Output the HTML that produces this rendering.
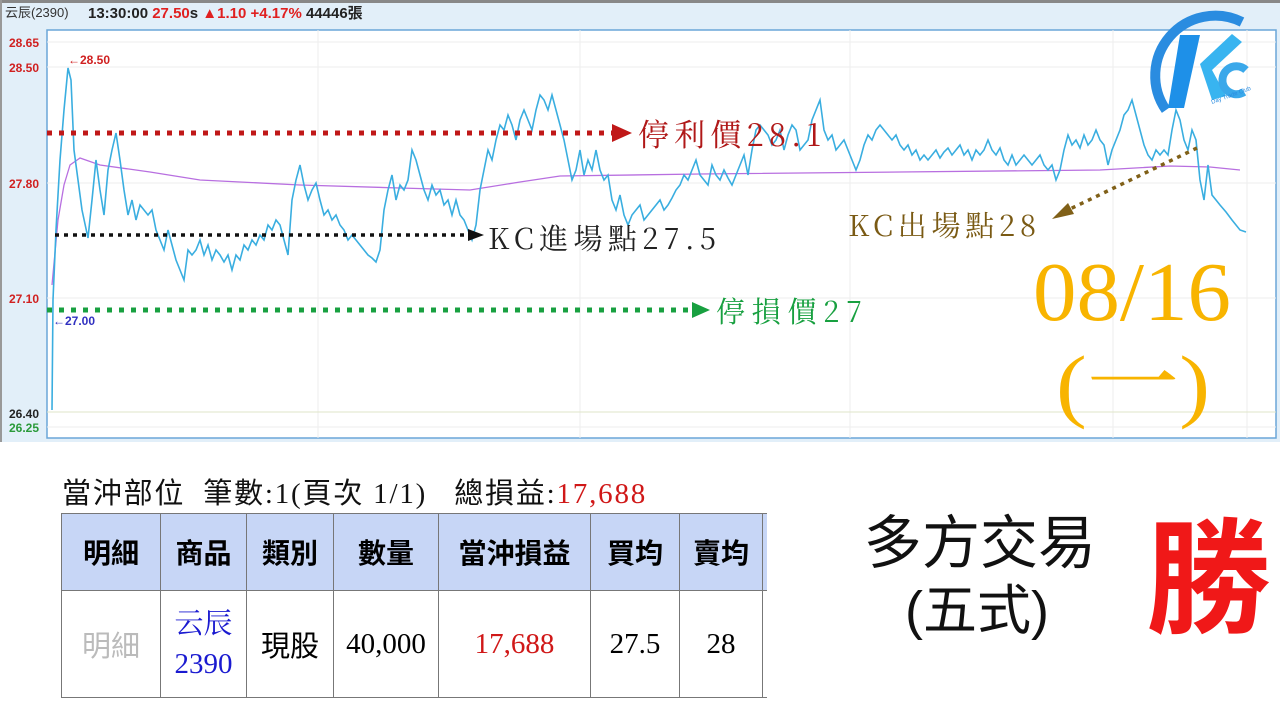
<!DOCTYPE html>
<html><head><meta charset="utf-8"><style>
body{margin:0;width:1280px;height:721px;background:#fff;overflow:hidden;position:relative;font-family:"Liberation Sans","Noto Sans CJK TC",sans-serif}
.abs{position:absolute;white-space:nowrap}
table{border-collapse:collapse;position:absolute;left:61px;top:513px}
td{border:1.5px solid #777;text-align:center;padding:0}
th{border:1.5px solid #777;background:#c7d6f6;font-weight:bold;font-size:28px;height:76px;font-family:"Liberation Sans","Noto Sans CJK TC",sans-serif;padding:0}
td{height:106px;font-size:29px;font-family:"Liberation Serif","Noto Serif CJK SC",serif}
</style></head><body>
<svg width="1280" height="442" style="position:absolute;left:0;top:0" font-family="Liberation Sans, Noto Sans CJK TC, sans-serif">
<rect x="0" y="0" width="1280" height="442" fill="#e2eff9"/>
<rect x="0" y="0" width="1280" height="3" fill="#888"/>
<rect x="0" y="0" width="2" height="442" fill="#999"/>
<rect x="47" y="30" width="1229" height="408" fill="#fff" stroke="#6aa6d8" stroke-width="1.5"/>
<g stroke="#eee" stroke-width="1">
<line x1="47" y1="42" x2="1276" y2="42"/><line x1="47" y1="67" x2="1276" y2="67"/><line x1="47" y1="183" x2="1276" y2="183"/><line x1="47" y1="298" x2="1276" y2="298"/><line x1="47" y1="427" x2="1276" y2="427"/>
<line x1="318" y1="30" x2="318" y2="438"/><line x1="580" y1="30" x2="580" y2="438"/><line x1="850" y1="30" x2="850" y2="438"/><line x1="1113" y1="30" x2="1113" y2="438"/><line x1="1247" y1="30" x2="1247" y2="438"/>
</g>
<line x1="47" y1="412" x2="1276" y2="412" stroke="#dfe6c8"/>
<text x="5" y="17" font-size="13" fill="#333">云辰(2390)</text>
<text x="88" y="18" font-size="15" font-weight="bold" fill="#222">13:30:00 <tspan fill="#e02020">27.50</tspan>s <tspan fill="#e02020">▲1.10 +4.17%</tspan> 44446張</text>
<g font-size="12" font-weight="bold">
<text x="9" y="47" fill="#d02020">28.65</text><text x="9" y="72" fill="#d02020">28.50</text><text x="9" y="188" fill="#d02020">27.80</text><text x="9" y="303" fill="#d02020">27.10</text><text x="9" y="418" fill="#222">26.40</text><text x="9" y="432" fill="#2a9a3a">26.25</text>
<text x="68" y="64" fill="#d02020">←28.50</text><text x="53" y="325" fill="#3030c0">←27.00</text>
</g>
<polyline fill="none" stroke="#b86fe0" stroke-width="1.3" points="52,285 58,220 64,185 70,165 80,158 100,165 150,172 200,180 300,185 400,188 470,190 520,182 560,176 700,174 900,172 1100,170 1170,166 1210,167 1240,170"/>
<polyline fill="none" stroke="#3aaee0" stroke-width="1.6" points="52,410 53,300 56,230 60,160 64,110 68,68 71,80 74,150 78,180 82,210 88,238 92,200 96,160 100,190 104,215 108,170 112,150 116,133 120,160 124,190 128,215 132,200 136,220 140,205 144,210 148,215 152,210 156,230 160,240 164,250 168,230 172,245 176,260 180,270 184,280 188,250 192,255 196,250 200,240 204,255 208,245 212,260 216,250 220,255 224,262 228,255 232,270 236,255 240,260 244,245 248,250 252,240 256,245 260,235 264,240 268,225 272,230 276,220 280,225 284,240 288,255 292,200 296,180 300,165 304,185 308,200 312,190 316,183 320,200 324,215 328,210 332,220 336,215 340,225 344,230 348,240 352,235 356,240 360,245 364,250 368,255 372,258 376,262 380,250 384,210 388,190 392,175 396,200 400,185 404,190 408,180 412,150 416,160 420,175 424,190 428,200 432,185 436,195 440,190 444,205 448,200 452,215 456,200 460,215 464,220 468,230 472,240 476,225 480,190 484,170 488,150 492,160 496,140 500,125 504,130 508,115 512,125 516,140 520,120 524,110 528,120 532,130 536,110 540,95 544,100 548,110 552,95 556,110 560,125 564,140 568,160 572,180 576,170 580,150 584,175 588,160 592,170 596,150 600,170 604,180 608,175 612,200 616,210 620,195 624,215 628,225 632,215 636,210 640,205 644,220 648,215 652,210 656,205 660,200 664,210 668,205 672,198 676,190 680,185 684,175 688,180 692,170 696,160 700,175 704,180 708,185 712,165 716,175 720,180 724,170 728,178 732,185 736,175 740,165 744,155 748,175 752,150 756,130 760,125 764,130 768,135 772,145 776,140 780,130 784,150 788,135 792,125 796,130 800,150 804,145 808,140 812,120 816,110 820,100 824,130 828,140 832,135 836,150 840,145 844,140 848,150 852,160 856,170 860,160 864,145 868,135 872,140 876,130 880,125 884,130 888,135 892,140 896,135 900,145 904,150 908,145 912,155 916,150 920,160 924,155 928,160 932,155 936,150 940,158 944,152 948,148 952,155 956,150 960,145 964,155 968,150 972,160 976,150 980,155 984,150 988,140 992,150 996,155 1000,148 1004,160 1008,165 1012,155 1016,165 1020,160 1024,155 1028,160 1032,165 1036,160 1040,155 1044,165 1048,170 1052,165 1056,180 1060,170 1064,150 1068,135 1072,145 1076,140 1080,148 1084,135 1088,145 1092,140 1096,130 1100,140 1104,145 1108,165 1112,150 1116,140 1120,130 1124,115 1128,110 1132,100 1136,115 1140,130 1144,145 1148,155 1152,160 1156,150 1160,155 1164,150 1168,155 1172,130 1176,110 1180,120 1184,140 1188,150 1192,130 1196,140 1200,180 1204,200 1208,165 1212,195 1216,200 1220,205 1226,212 1232,220 1240,230 1246,232"/>
<line x1="47" y1="133" x2="612" y2="133" stroke="#c01818" stroke-width="5" stroke-dasharray="5,7"/>
<polygon points="612,124 632,133 612,142" fill="#c01818"/>
<line x1="55" y1="235" x2="470" y2="235" stroke="#111" stroke-width="3.5" stroke-dasharray="4,5"/>
<polygon points="468,229 484,235 468,241" fill="#111"/>
<line x1="47" y1="310" x2="692" y2="310" stroke="#18a040" stroke-width="5" stroke-dasharray="5,7"/>
<polygon points="692,302 710,310 692,318" fill="#18a040"/>
<line x1="1197" y1="148" x2="1068" y2="210" stroke="#806018" stroke-width="3.5" stroke-dasharray="4,5"/>
<polygon points="1052,219 1068,203 1074,214" fill="#806018"/>
<g font-family="Noto Serif CJK SC, Liberation Serif, serif">
<text x="638" y="146" font-size="31" fill="#b01818" textLength="183">停利價28.1</text>
<text x="488" y="249" font-size="29" fill="#222" textLength="228">KC進場點27.5</text>
<text x="716" y="322" font-size="29" fill="#18a040" textLength="146">停損價27</text>
<text x="848" y="236" font-size="29" fill="#7a5a14" textLength="188">KC出場點28</text>
</g>
<text x="1033" y="320" font-size="84" fill="#f8b400" font-family="Liberation Serif, serif" textLength="198" lengthAdjust="spacingAndGlyphs">08/16</text>
<text x="1056" y="412" font-size="82" fill="#f8b400" font-family="Liberation Serif, Noto Serif CJK SC, serif" textLength="154" lengthAdjust="spacingAndGlyphs">(一)</text>
<g>
<path d="M1166 110 A60 60 0 0 1 1242 22" fill="none" stroke="#2a8ce0" stroke-width="10"/>
<polygon points="1180,35 1200,35 1184,108 1168,108" fill="#1e90e8"/>
<polygon points="1200,64 1232,34 1242,42 1212,70 1226,96 1212,100" fill="#38b4f0"/>
<path d="M1246 70 A14 14 0 1 0 1244 92" fill="none" stroke="#3aa8ea" stroke-width="8"/>
<text x="1212" y="104" font-size="6" fill="#2a8ce0" transform="rotate(-20 1212 104)">Day Trade Club</text>
</g>
</svg>
<div class="abs" style="left:62px;top:470px;font-size:29px;letter-spacing:1.8px;font-family:'Liberation Serif','Noto Sans CJK TC',serif;color:#111">當沖部位&nbsp;&nbsp;筆數:1(頁次 1/1)&nbsp;&nbsp;&nbsp;總損益:<span style="color:#d01818">17,688</span></div>
<table>
<tr><th style="width:98px">明細</th><th style="width:85px">商品</th><th style="width:86px">類別</th><th style="width:104px">數量</th><th style="width:151px">當沖損益</th><th style="width:88px">買均</th><th style="width:82px">賣均</th><th style="width:4px;border-right:none"></th></tr>
<tr><td style="color:#bbb;font-family:'Liberation Sans','Noto Sans CJK TC',sans-serif">明細</td><td style="color:#1a1ad0;line-height:40px">云辰<br>2390</td><td style="font-family:'Liberation Sans','Noto Sans CJK TC',sans-serif">現股</td><td>40,000</td><td style="color:#d01818">17,688</td><td>27.5</td><td>28</td><td style="border-right:none"></td></tr>
</table>
<div class="abs" style="left:864px;top:496px;font-size:58px;color:#111">多方交易</div>
<div class="abs" style="left:905px;top:566px;font-size:54px;color:#111">(五式)</div>
<div class="abs" style="left:1146px;top:478px;font-size:125px;font-weight:bold;color:#f01818">勝</div>
</body></html>
